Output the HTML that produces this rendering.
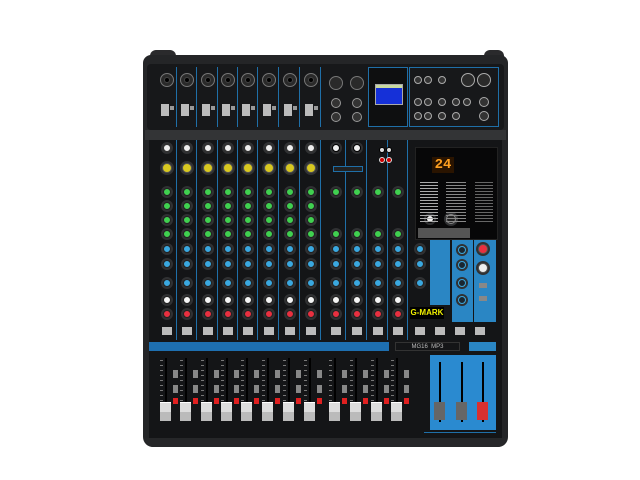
<!DOCTYPE html>
<html><head><meta charset="utf-8">
<style>
*{margin:0;padding:0;box-sizing:border-box}
body{width:640px;height:480px;background:#fff;position:relative;overflow:hidden;font-family:"Liberation Sans",sans-serif}
.a{position:absolute}
.k{position:absolute;border-radius:50%}
</style></head><body>
<div class="a" style="left:150px;top:50px;width:26px;height:10px;background:#2a2a2c;border-radius:6px 6px 0 0"></div>
<div class="a" style="left:484px;top:50px;width:20px;height:10px;background:#2a2a2c;border-radius:6px 6px 0 0"></div>
<div class="a" style="left:143px;top:55px;width:365px;height:392px;background:#242527;border-radius:8px 8px 10px 10px"></div>
<div class="a" style="left:147px;top:64px;width:357px;height:66px;background:#17181a;border-radius:4px"></div>
<div class="a" style="left:145px;top:130px;width:361px;height:10px;background:#333436"></div>
<div class="a" style="left:149px;top:140px;width:353px;height:300px;background:#141517"></div>
<div class="a" style="left:145px;top:438px;width:361px;height:9px;background:#262729;border-radius:0 0 10px 10px"></div>
<div class="a" style="left:368px;top:67px;width:40px;height:60px;border:1px solid #1f6fa8;background:#0e0f10"></div>
<div class="a" style="left:375px;top:84px;width:28px;height:21px;background:#1530d8;border:1px solid #aaa"></div>
<div class="a" style="left:376px;top:85px;width:26px;height:3px;background:#c8d8a0"></div>
<div class="a" style="left:409px;top:67px;width:90px;height:60px;border:1px solid #1f6fa8"></div>
<div class="a" style="left:415px;top:147px;width:83px;height:93px;background:#070708;border:1px solid #222"></div>
<div class="a" style="left:432px;top:157px;width:22px;height:16px;background:#2a1400;color:#ffa020;font:bold 14px/16px 'Liberation Mono',monospace;text-align:center">24</div>
<div class="a" style="left:418px;top:228px;width:52px;height:10px;background:#555"></div>
<div class="a" style="left:430px;top:240px;width:20px;height:65px;background:#2a86c4"></div>
<div class="a" style="left:452px;top:240px;width:21px;height:82px;background:#2a86c4"></div>
<div class="a" style="left:474px;top:240px;width:22px;height:82px;background:#2a86c4"></div>
<div class="a" style="left:410px;top:307px;width:34px;height:12px;background:#000;color:#f0f000;font:bold 8px/12px 'Liberation Sans',sans-serif;text-align:center;white-space:nowrap">G-MARK</div>
<div class="a" style="left:395px;top:342px;width:65px;height:9px;border:1px solid #333;color:#bbb;font:6px/8px 'Liberation Sans',sans-serif;text-align:center;white-space:nowrap">MG16 &nbsp;MP3</div>
<div class="a" style="left:469px;top:342px;width:27px;height:9px;background:#2a86c4"></div>
<div class="a" style="left:149px;top:342px;width:240px;height:9px;background:#1e6fb0"></div>
<div class="a" style="left:430px;top:355px;width:66px;height:75px;background:#2a8ad0"></div>
<div id="g"></div>
<script>
var g=document.getElementById('g'),h='';
function k(x,y,r,c,ring){h+='<div class="k" style="left:'+(x-r-2)+'px;top:'+(y-r-2)+'px;width:'+(2*r+4)+'px;height:'+(2*r+4)+'px;background:#303133"></div><div class="k" style="left:'+(x-r)+'px;top:'+(y-r)+'px;width:'+2*r+'px;height:'+2*r+'px;background:'+c+';border:1px solid '+(ring||'#000')+'"></div>';}
function j(x,y,r,c,ring){h+='<div class="k" style="left:'+(x-r)+'px;top:'+(y-r)+'px;width:'+2*r+'px;height:'+2*r+'px;background:'+c+';border:1px solid '+(ring||'#000')+'"></div>';}
function b(x,y,w,hh,c,ex){h+='<div class="a" style="left:'+x+'px;top:'+y+'px;width:'+w+'px;height:'+hh+'px;background:'+c+';'+(ex||'')+'"></div>';}
var mono=[167,187,208,228,248,269,290,311],st=[336,357,378,398];
function strip(x){
 [249,264,283].forEach(function(y){k(x,y,4,'#3aa8e0','#222')});
 k(x,300,4,'#f4f4f4','#222');k(x,314,4,'#e83040','#222');
 b(x-5,327,10,8,'#bbb');
 for(var i=0;i<10;i++)b(x-7,360+i*5,3,1,'#777');
 b(x-2,358,2,62,'#000');b(x+6,370,5,8,'#888');b(x+6,385,5,8,'#888');b(x+6,398,5,6,'#e02020');
 b(x-7,402,11,19,'#ddd','border-top:1px solid #fff;box-shadow:inset 0 -9px 0 #bbb');
}
mono.forEach(function(x,i){
 b(x+9,67,1,60,'#1f6fa8');b(x+9,140,1,200,'#1f6fa8');
 j(x,80,7,'#2a2a2a','#777');j(x,80,3,'#000','#444');
 b(x-6,104,8,12,'#bbb');b(x+3,106,4,4,'#999');
 k(x,148,4,'#eee','#333');k(x,168,5,'#d8c820','#555');
 [192,206,220,234].forEach(function(y){k(x,y,4,'#40d050','#222')});
 strip(x);
});
st.forEach(function(x){
 b(x+9,140,1,200,'#1f6fa8');
 [192,234].forEach(function(y){k(x,y,4,'#40d050','#222')});
 strip(x);
});
k(336,148,4,'#eee');k(357,148,4,'#eee');
j(336,83,7,'#2a2a2a','#777');j(357,83,7,'#2a2a2a','#777');
[103,117].forEach(function(y){j(336,y,5,'#333','#999');j(357,y,5,'#333','#999')});
[[418,80],[428,80],[442,80],[418,102],[428,102],[442,102],[456,102],[467,102],[418,116],[428,116],[442,116],[456,116]].forEach(function(p){j(p[0],p[1],4,'#333','#aaa')});
j(468,80,7,'#2a2a2a','#aaa');j(484,80,7,'#2a2a2a','#aaa');j(484,102,5,'#333','#aaa');j(484,116,5,'#333','#aaa');
j(382,150,3,'#ddd');j(389,150,3,'#ddd');j(382,160,3,'#c00','#ddd');j(389,160,3,'#c00','#ddd');
b(333,166,30,6,'#222','border:1px solid #1f6fa8');
[249,264,283].forEach(function(y){k(420,y,4,'#3aa8e0','#222')});
[250,265,283,300].forEach(function(y){k(462,y,4,'#1a2630','#3aa8e0')});
k(483,249,5,'#e83040','#555');k(483,268,5,'#eee','#555');
b(479,283,8,5,'#888');b(479,296,8,5,'#888');
[420,440,460,480].forEach(function(x){b(x-5,327,10,8,'#bbb')});
k(430,219,4,'#eee');k(451,219,5,'#222','#888');
for(var i=0;i<14;i++){b(420,182+i*3,18,1,'#aaa');b(446,182+i*3,20,1,'#888');b(475,182+i*3,18,1,'#666')}
[440,462,483].forEach(function(x,i){b(x-1,362,2,60,'#000');b(x-6,402,11,18,i==2?'#d83030':'#666')});
b(424,432,72,1,'#1f6fa8');
g.innerHTML=h;
</script>
</body></html>
